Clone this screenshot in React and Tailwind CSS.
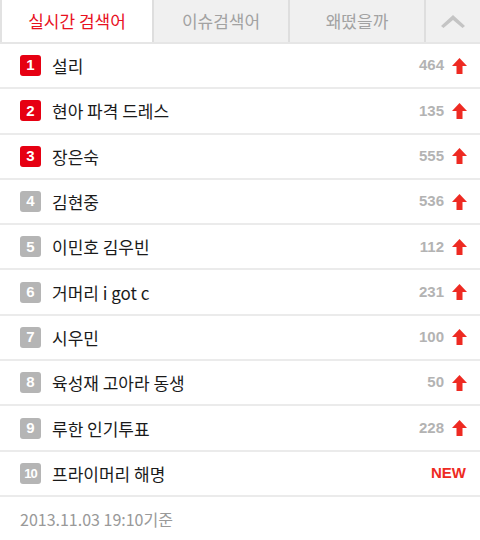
import React from "react";

const items = [
  { rank: 1, word: "설리", count: "464" },
  { rank: 2, word: "현아 파격 드레스", count: "135" },
  { rank: 3, word: "장은숙", count: "555" },
  { rank: 4, word: "김현중", count: "536" },
  { rank: 5, word: "이민호 김우빈", count: "112" },
  { rank: 6, word: "거머리 i got c", count: "231" },
  { rank: 7, word: "시우민", count: "100" },
  { rank: 8, word: "육성재 고아라 동생", count: "50" },
  { rank: 9, word: "루한 인기투표", count: "228" },
  { rank: 10, word: "프라이머리 해명", count: null },
];

function UpArrow() {
  return (
    <svg width="15" height="16" viewBox="0 0 15 16" className="shrink-0">
      <path d="M7.5 0 L15 8 L10.5 8 L10.5 16 L4.5 16 L4.5 8 L0 8 Z" fill="#ee2a22" />
    </svg>
  );
}

export default function App() {
  return (
    <div
      className="w-[480px] h-[540px] bg-white overflow-hidden"
      style={{ fontFamily: '"Noto Sans CJK KR", "Noto Sans", sans-serif' }}
    >
      {/* tabs */}
      <div className="flex h-[44px] border-b-2 border-[#e6e6e6]">
        <div className="w-[152px] border-l-2 border-[#e2e2e2] bg-white flex items-center justify-center text-[17px] text-[#e8101e]">
          실시간 검색어
        </div>
        <div className="w-[136px] bg-[#f0f0f0] border-l-2 border-[#dedede] flex items-center justify-center text-[17px] text-[#a2a2a2]">
          이슈검색어
        </div>
        <div className="w-[136px] bg-[#f0f0f0] border-l-2 border-[#dedede] flex items-center justify-center text-[17px] text-[#a2a2a2]">
          왜떴을까
        </div>
        <div className="flex-1 bg-[#f0f0f0] border-l-2 border-[#dedede] flex items-center justify-center">
          <svg width="24" height="13" viewBox="0 0 24 13">
            <path d="M0 11 L12 0 L24 11 L21.5 13 L12 5 L2.5 13 Z" fill="#c4c4c4" />
          </svg>
        </div>
      </div>

      {/* list */}
      <div className="flex flex-col">
        {items.map((it) => (
          <div
            key={it.rank}
            className="h-[45.3px] flex items-center pl-[20px] pr-[13px] border-b-2 border-[#ebebeb]"
          >
            <span
              className={
                "w-[21px] h-[21px] rounded-[3px] flex items-center justify-center text-white font-bold shrink-0 " +
                (it.rank <= 3 ? "bg-[#e60012] " : "bg-[#b5b5b5] ") +
                (it.rank === 10 ? "text-[13px] tracking-[-1px]" : "text-[15px]")
              }
              style={{ fontFamily: '"Liberation Sans", Arial, sans-serif' }}
            >
              {it.rank}
            </span>
            <span className="ml-[11px] text-[17px] text-[#1a1a1a] flex-1 leading-none">{it.word}</span>
            {it.count ? (
              <div className="flex items-center gap-[8px]">
                <span
                  className="text-[15px] font-bold text-[#b3b3b3]"
                  style={{ fontFamily: '"Liberation Sans", Arial, sans-serif' }}
                >
                  {it.count}
                </span>
                <UpArrow />
              </div>
            ) : (
              <span
                className="text-[15px] font-bold text-[#ee2a22] mr-[1px]"
                style={{ fontFamily: '"Liberation Sans", Arial, sans-serif' }}
              >
                NEW
              </span>
            )}
          </div>
        ))}
      </div>

      {/* footer */}
      <div className="pl-[20px] pt-[10px] text-[16px] text-[#999]">2013.11.03 19:10기준</div>
    </div>
  );
}
